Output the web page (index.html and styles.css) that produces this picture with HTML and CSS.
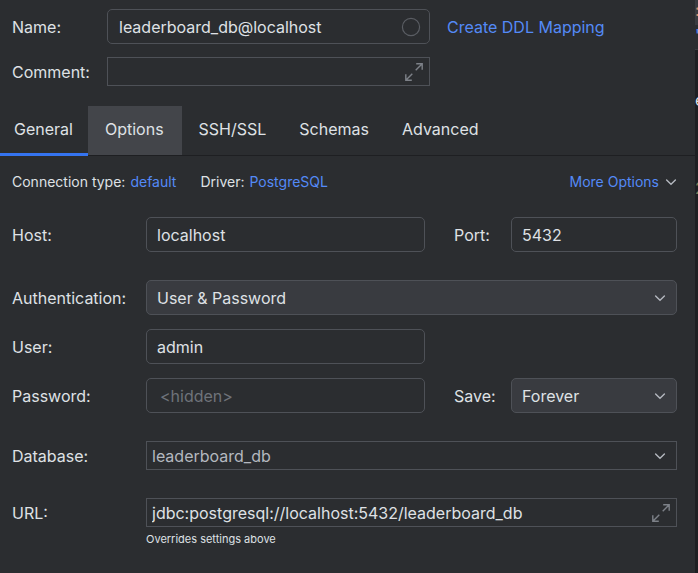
FILE: index.html
```html
<!DOCTYPE html>
<html lang="en">
<head>
<meta charset="utf-8">
<title>Data Source</title>
<link rel="stylesheet" href="styles.css">
</head>
<body>
<svg class="defs" aria-hidden="true">
  <symbol id="chevron" viewBox="0 0 12 12"><path d="M1.6 3.9 6 8.2 10.4 3.9" fill="none" stroke="currentColor" stroke-width="1.4" stroke-linecap="round"/></symbol>
  <symbol id="expand" viewBox="0 0 18 18"><path d="M10.7 7.3 17.2 0.8M11.2 0.8h6v6M7.3 10.7 0.8 17.2M0.8 11.2v6h6" fill="none" stroke="currentColor" stroke-width="1.4"/></symbol>
</svg>
<div class="window">
  <main class="panel">
    <form class="identity">
      <label for="name">Name:</label>
      <div class="field">
        <input class="control wide" id="name" type="text" value="leaderboard_db@localhost">
        <button class="icon-button color-picker" type="button" aria-label="Color"><svg viewBox="0 0 20 20"><circle cx="10" cy="10" r="8.6" fill="none" stroke="currentColor" stroke-width="1.2"/></svg></button>
      </div>
      <a class="link" href="#mapping">Create DDL Mapping</a>
      <label for="comment">Comment:</label>
      <div class="field">
        <input class="control flat" id="comment" type="text">
        <button class="icon-button" type="button" aria-label="Expand"><svg><use href="#expand"/></svg></button>
      </div>
    </form>

    <nav class="tabs">
      <button class="tab selected" type="button">General</button>
      <button class="tab hovered" type="button">Options</button>
      <button class="tab" type="button">SSH/SSL</button>
      <button class="tab" type="button">Schemas</button>
      <button class="tab" type="button">Advanced</button>
    </nav>

    <div class="summary">
      <span class="pair">Connection type: <a class="link" href="#type">default</a></span>
      <span class="pair">Driver: <a class="link" href="#driver">PostgreSQL</a></span>
      <a class="link more" href="#more">More Options <svg class="chevron"><use href="#chevron"/></svg></a>
    </div>

    <form class="settings">
      <div class="row">
        <label for="host">Host:</label>
        <input class="control" id="host" type="text" value="localhost">
        <label class="second" for="port">Port:</label>
        <input class="control" id="port" type="text" value="5432">
      </div>
      <div class="group">
        <div class="row">
          <label for="auth">Authentication:</label>
          <div class="field span">
            <select class="control filled" id="auth"><option>User &amp; Password</option></select>
            <svg class="chevron"><use href="#chevron"/></svg>
          </div>
        </div>
        <div class="row">
          <label for="user">User:</label>
          <input class="control" id="user" type="text" value="admin">
        </div>
        <div class="row">
          <label for="password">Password:</label>
          <input class="control secret" id="password" type="password" placeholder="&lt;hidden&gt;">
          <label class="second" for="save">Save:</label>
          <div class="field">
            <select class="control filled" id="save"><option>Forever</option></select>
            <svg class="chevron"><use href="#chevron"/></svg>
          </div>
        </div>
      </div>
      <div class="row">
        <label for="database">Database:</label>
        <div class="field span">
          <select class="control flat muted" id="database"><option>leaderboard_db</option></select>
          <svg class="chevron"><use href="#chevron"/></svg>
        </div>
      </div>
      <div class="row">
        <label for="url">URL:</label>
        <div class="field span">
          <input class="control flat" id="url" type="text" value="jdbc:postgresql://localhost:5432/leaderboard_db">
          <button class="icon-button" type="button" aria-label="Expand"><svg><use href="#expand"/></svg></button>
        </div>
        <small class="hint">Overrides settings above</small>
      </div>
    </form>
  </main>
  <aside class="backdrop">
    <span class="bar tan">:</span>
    <span class="bar blue">'</span>
    <span class="code">e</span>
    <span class="code olive">2</span>
  </aside>
</div>
</body>
</html>
```
FILE: styles.css
```css
* { box-sizing: border-box; }

body {
  margin: 0;
  background: #2b2d30;
  color: #dfe1e5;
  font: 16px/20px Inter, sans-serif;
}

input, select, button {
  margin: 0;
  font: inherit;
  color: inherit;
}

.defs { position: absolute; width: 0; height: 0; }

.window {
  display: grid;
  grid-template-columns: minmax(0, 1fr) 3px;
  min-height: 100vh;
}

.link { color: #548af7; text-decoration: none; }

/* Controls */
.control {
  display: block;
  width: 100%;
  min-width: 0;
  height: 35px;
  padding: 0 10px;
  border: 1px solid #4e5157;
  border-radius: 5px;
  outline: 0;
  background: transparent;
  appearance: none;
}
.control.wide { padding: 0 36px 0 11px; }
.control.flat { height: 29px; padding: 0 32px 0 5px; border-radius: 0; }
.control.filled { background: #393b40; }
.control.muted { color: #b4b8bf; }
.control.secret { padding: 0 13px; }
.control::placeholder { color: #6f737a; opacity: 1; }

.field { display: grid; align-items: center; }
.field > * { grid-area: 1 / 1; }
.field > .chevron { justify-self: end; margin-right: 11px; pointer-events: none; }

.chevron { width: 12px; height: 12px; color: #b4b8bf; }

.icon-button {
  display: flex;
  justify-self: end;
  margin-right: 7px;
  padding: 0;
  border: 0;
  background: none;
  color: #7d8188;
}
.icon-button svg { width: 18px; height: 18px; }
.color-picker { margin-right: 9px; color: #5a5d63; }
.color-picker svg { width: 20px; height: 20px; }

/* Name and comment */
.identity {
  display: grid;
  grid-template-columns: 95px minmax(0, 323px) auto;
  justify-content: start;
  align-items: center;
  row-gap: 13px;
  padding: 9px 18px 20px 12px;
}
.identity > .link { margin-left: 17px; }

/* Tabs */
.tabs { display: flex; border-bottom: 1px solid #1e1f22; }
.tab {
  height: 49px;
  padding: 0 16px 3px 17px;
  border: 0;
  background: none;
}
.tab.selected {
  margin-bottom: -1px;
  height: 50px;
  padding: 0 15px 4px 14px;
  box-shadow: inset 0 -3px #3574f0;
}
.tab.hovered { padding-right: 18px; background: #43454a; }

/* Connection summary */
.summary {
  display: flex;
  gap: 24px;
  padding: 16px 18px 0 12px;
  font-size: 14px;
}
.pair { display: flex; gap: 5px; }
.more { display: flex; align-items: center; gap: 6px; margin-left: auto; }

/* Settings */
.settings {
  display: grid;
  gap: 28px;
  padding: 25px 18px 27px 12px;
}
.group { display: grid; gap: 14px; }
.row {
  display: grid;
  grid-template-columns: 134px minmax(0, 1fr) 86px 166px;
  align-items: center;
}
.second { padding-left: 29px; }
.span { grid-column: 2 / -1; }
.hint {
  grid-column: 2 / -1;
  padding-top: 3px;
  font-size: 11px;
  line-height: 18px;
}

/* Editor edge behind the dialog */
.backdrop {
  display: flex;
  flex-direction: column;
  overflow: hidden;
  background: #1e1f22;
}
.bar {
  height: 25px;
  border-bottom: 1px solid #393b40;
  background: #2b2d30;
}
.tan { color: #cf8e6d; background: #393b40; }
.blue { color: #548af7; }
.code { padding-top: 40px; height: 88px; }
.olive { color: #7a7e55; }
```
